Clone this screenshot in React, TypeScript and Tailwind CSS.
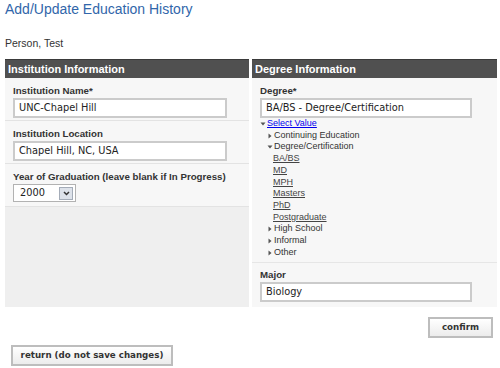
const tree = [
  { label: 'Continuing Education', open: false },
  {
    label: 'Degree/Certification',
    open: true,
    children: ['BA/BS', 'MD', 'MPH', 'Masters', 'PhD', 'Postgraduate'],
  },
  { label: 'High School', open: false },
  { label: 'Informal', open: false },
  { label: 'Other', open: false },
]

function Caret({ open }: { open: boolean }) {
  return open ? (
    <svg width="6" height="6" viewBox="0 0 6 6" className="shrink-0">
      <path d="M0.5 1.5 L5.5 1.5 L3 4.5 Z" fill="#555" />
    </svg>
  ) : (
    <svg width="6" height="6" viewBox="0 0 6 6" className="shrink-0">
      <path d="M1.5 0.5 L4.5 3 L1.5 5.5 Z" fill="#555" />
    </svg>
  )
}

function TextInput({ value, width }: { value: string; width: string }) {
  return (
    <div
      className={`${width} mt-[1px] h-[20px] flex items-center px-[4px] bg-white border-2 border-[#cbcbcb] font-['DejaVu_Sans'] text-[9.8px] text-[#222]`}
    >
      {value}
    </div>
  )
}

function Label({ children }: { children: React.ReactNode }) {
  return <div className="text-[9.7px] leading-[13px] font-bold text-[#333]">{children}</div>
}

function Header({ title }: { title: string }) {
  return (
    <div className="h-[19px] shrink-0 bg-[#505050] border-t border-[#3a3a3a] flex items-center px-[3px] text-[11px] font-bold text-white">
      {title}
    </div>
  )
}

export default function App() {
  return (
    <div className="w-[500px] h-[368px] bg-white font-['Liberation_Sans',Arial,sans-serif] overflow-hidden">
      <h1 className="pl-[5px] pt-[1px] text-[14px] leading-[16px] text-[#3166aa]">
        Add/Update Education History
      </h1>
      <p className="pl-[5px] mt-[20px] text-[10.5px] leading-[12px] text-[#333]">Person, Test</p>

      <div className="mt-[10px] pl-[5px] flex gap-[3px]">
        {/* left panel */}
        <div className="w-[244px] h-[248px] flex flex-col bg-[#efefef]">
          <Header title="Institution Information" />
          <div className="px-[8px] pt-[6px] pb-[2px] bg-[#f7f7f7] border-b border-[#e3e3e3]">
            <Label>Institution Name*</Label>
            <TextInput value="UNC-Chapel Hill" width="w-[214px]" />
          </div>
          <div className="px-[8px] pt-[6px] pb-[2px] bg-[#f7f7f7] border-b border-[#e3e3e3]">
            <Label>Institution Location</Label>
            <TextInput value="Chapel Hill, NC, USA" width="w-[214px]" />
          </div>
          <div className="px-[8px] pt-[6px] pb-[4px] bg-[#f7f7f7] border-b border-[#e3e3e3]">
            <Label>Year of Graduation (leave blank if In Progress)</Label>
            <div className="mt-[1px] w-[63px] h-[18px] flex items-center justify-between pl-[6px] pr-[2px] bg-white border border-[#b2b2b2] font-['DejaVu_Sans'] text-[9.8px] text-[#222]">
              2000
              <div className="w-[14px] h-[13px] flex items-center justify-center bg-[#dde2ea] border border-[#a4acb8]">
                <svg width="7" height="5" viewBox="0 0 7 5">
                  <path d="M1 1 L3.5 3.5 L6 1" stroke="#333" strokeWidth="1.5" fill="none" />
                </svg>
              </div>
            </div>
          </div>
        </div>

        {/* right panel */}
        <div className="w-[245px] h-[248px] flex flex-col bg-[#f7f7f7]">
          <Header title="Degree Information" />
          <div className="px-[8px] pt-[6px] pb-[4px] border-b border-[#e6e6e6] h-[185px]">
            <Label>Degree*</Label>
            <TextInput value="BA/BS - Degree/Certification" width="w-[212px]" />
            <div className="text-[9px] leading-[11.7px] text-[#333]">
              <div className="flex items-center gap-[1px]">
                <Caret open />
                <span className="text-[#0000ee] underline">Select Value</span>
              </div>
              {tree.map((node) => (
                <div key={node.label}>
                  <div className="flex items-center gap-[1px] pl-[7px]">
                    <Caret open={node.open} />
                    <span>{node.label}</span>
                  </div>
                  {node.children?.map((c) => (
                    <div key={c} className="pl-[13px] underline text-[#444]">
                      {c}
                    </div>
                  ))}
                </div>
              ))}
            </div>
          </div>
          <div className="px-[8px] pt-[5px]">
            <Label>Major</Label>
            <TextInput value="Biology" width="w-[212px]" />
          </div>
        </div>
      </div>

      <div className="mt-[10px] pr-[7px] flex justify-end">
        <button className="w-[65px] h-[21px] border-2 border-[#bdbdbd] bg-gradient-to-b from-white to-[#ececec] font-['DejaVu_Sans'] font-bold text-[8.7px] text-[#333]">
          confirm
        </button>
      </div>
      <div className="mt-[3px] pl-[11px]">
        <button className="w-[162px] h-[21px] border-2 border-[#bdbdbd] bg-gradient-to-b from-white to-[#ececec] font-['DejaVu_Sans'] font-bold text-[8.7px] text-[#333]">
          return (do not save changes)
        </button>
      </div>
    </div>
  )
}
